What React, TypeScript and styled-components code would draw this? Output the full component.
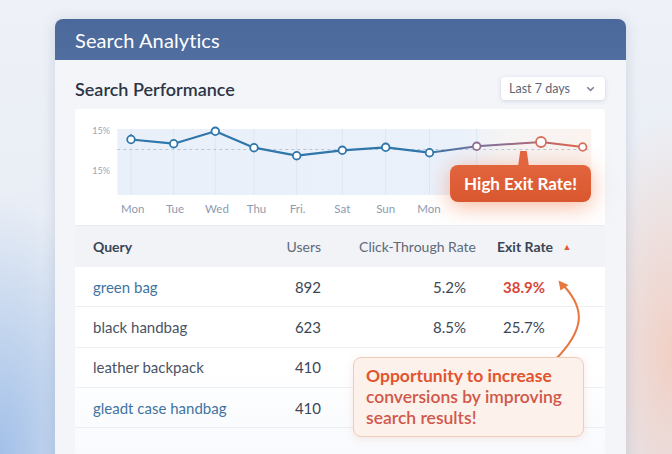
import React, { FC } from 'react';
import styled, { createGlobalStyle } from 'styled-components';

const GlobalStyle = createGlobalStyle`
  html, body {
    margin: 0;
    padding: 0;
  }
  body {
    font-family: Lato, "Noto Sans", "Liberation Sans", sans-serif;
  }
`;

interface Point {
  x: number;
  y: number;
  big?: boolean;
}

const points: Point[] = [
  { x: 56, y: 30.5 },
  { x: 98.7, y: 34.7 },
  { x: 140.3, y: 22.3 },
  { x: 179, y: 38.7 },
  { x: 221.7, y: 46.7 },
  { x: 267.3, y: 41.3 },
  { x: 310.7, y: 38.3 },
  { x: 354.5, y: 43.7 },
  { x: 401.7, y: 37.3 },
  { x: 466, y: 33, big: true },
  { x: 507.7, y: 38 },
];

const days = [
  { label: 'Mon', x: 57.8 },
  { label: 'Tue', x: 100 },
  { label: 'Wed', x: 142 },
  { label: 'Thu', x: 181.5 },
  { label: 'Fri.', x: 222.7 },
  { label: 'Sat', x: 267.3 },
  { label: 'Sun', x: 310.7 },
  { label: 'Mon', x: 354 },
];

interface Row {
  query: string;
  users: number;
  ctr?: string;
  exit?: string;
  link?: boolean;
  hot?: boolean;
}

const rows: Row[] = [
  { query: 'green bag', users: 892, ctr: '5.2%', exit: '38.9%', link: true, hot: true },
  { query: 'black handbag', users: 623, ctr: '8.5%', exit: '25.7%' },
  { query: 'leather backpack', users: 410 },
  { query: 'gleadt case handbag', users: 410, link: true },
];

const Chart: FC = () => {
  const blue = points.slice(0, 8);
  const warm = points.slice(7);
  const toPath = (list: Point[]) =>
    list.map((p, i) => `${i === 0 ? 'M' : 'L'} ${p.x} ${p.y}`).join(' ');

  return (
    <ChartSvg width={529} height={116} viewBox="0 0 529 116">
      <defs>
        <linearGradient id="warmLine" x1="354" y1="0" x2="508" y2="0" gradientUnits="userSpaceOnUse">
          <stop offset="0" stopColor="#3a78aa" />
          <stop offset="0.45" stopColor="#8a6f96" />
          <stop offset="1" stopColor="#e0654a" />
        </linearGradient>
        <linearGradient id="plotFill" x1="0" y1="0" x2="1" y2="0">
          <stop offset="0" stopColor="#e9f0fa" />
          <stop offset="0.72" stopColor="#eaf1fb" />
          <stop offset="0.82" stopColor="#f6f4f4" />
          <stop offset="1" stopColor="#fbf3ef" />
        </linearGradient>
      </defs>
      <rect x={42.3} y={20} width={474} height={66} fill="url(#plotFill)" />
      {points.slice(0, 9).map((p, i) => (
        <line key={i} x1={p.x} y1={20} x2={p.x} y2={86} stroke="#dde6f2" strokeWidth={1} />
      ))}
      <line x1={42.3} y1={40.5} x2={516} y2={40.5} stroke="#b9c5d6" strokeWidth={1} strokeDasharray="3 3" />
      <GridLabel x={35} y={24.5} textAnchor="end">15%</GridLabel>
      <GridLabel x={35} y={64.5} textAnchor="end">15%</GridLabel>
      <path d="M 56 30 L 56 25" stroke="#3a78aa" strokeWidth={1.4} />
      <path d={toPath(blue)} fill="none" stroke="#2f76ab" strokeWidth={2.2} strokeLinejoin="round" />
      <path d={toPath(warm)} fill="none" stroke="url(#warmLine)" strokeWidth={2} strokeLinejoin="round" />
      {points.map((p, i) => (
        <circle
          key={i}
          cx={p.x}
          cy={p.y}
          r={p.big ? 5 : 3.8}
          fill="#ffffff"
          stroke={i < 8 ? '#2f76ab' : i === 8 ? '#8d7091' : '#d8705e'}
          strokeWidth={1.8}
        />
      ))}
      {days.map((d, i) => (
        <DayLabel key={i} x={d.x} y={103.5} textAnchor="middle">
          {d.label}
        </DayLabel>
      ))}
    </ChartSvg>
  );
};

const App: FC = () => {
  return (
    <Page>
      <GlobalStyle />
      <Card>
        <CardHeader>Search Analytics</CardHeader>
        <CardBody>
          <TitleRow>
            <Title>Search Performance</Title>
            <RangeSelect>
              Last 7 days
              <svg width="9" height="6" viewBox="0 0 9 6">
                <path d="M1.2 1.2 L4.5 4.4 L7.8 1.2" fill="none" stroke="#7b8594" strokeWidth="1.5" />
              </svg>
            </RangeSelect>
          </TitleRow>
          <ChartPanel>
            <Chart />
            <ExitBadge>High Exit Rate!</ExitBadge>
          </ChartPanel>
          <TablePanel>
            <HeadRow>
              <Cell $strong>Query</Cell>
              <Cell $align="right">Users</Cell>
              <Cell $align="right">Click-Through Rate</Cell>
              <Cell $strong>
                Exit Rate <SortMark>▲</SortMark>
              </Cell>
            </HeadRow>
            {rows.map((r, i) => (
              <BodyRow key={i}>
                <QueryCell $link={r.link}>{r.query}</QueryCell>
                <Cell $align="right" $dark>
                  {r.users}
                </Cell>
                <Cell $align="right" $dark $pad="0 10px 0 0">
                  {r.ctr}
                </Cell>
                <ExitCell $hot={r.hot}>{r.exit}</ExitCell>
              </BodyRow>
            ))}
            <ArrowSvg width={60} height={90} viewBox="0 0 60 90">
              <path d="M 11 80 C 40 50, 40 30, 19 7" fill="none" stroke="#e8763f" strokeWidth={2} strokeLinecap="round" />
              <path d="M 13.5 1.5 L 23.5 6 L 15.5 11.5 Z" fill="#e8763f" />
            </ArrowSvg>
            <Opportunity>
              <strong>Opportunity to increase</strong>
              <span>conversions by improving</span>
              <span>search results!</span>
            </Opportunity>
          </TablePanel>
        </CardBody>
      </Card>
    </Page>
  );
};

const Page = styled.div`
  width: 672px;
  height: 454px;
  overflow: hidden;
  box-sizing: border-box;
  padding: 19px 46px 0 55px;
  background:
    radial-gradient(ellipse 120px 260px at 0% 100%, rgba(140, 178, 228, 0.75), transparent),
    radial-gradient(ellipse 90px 240px at 100% 78%, rgba(246, 196, 176, 0.7), transparent),
    linear-gradient(180deg, #eef1f7 0%, #e8edf5 60%, #e4eaf4 100%);
`;

const Card = styled.div`
  height: 470px;
  border-radius: 8px 8px 0 0;
  background: #f3f5f9;
  box-shadow: 0 2px 14px rgba(60, 80, 120, 0.18);
  overflow: hidden;
`;

const CardHeader = styled.div`
  height: 41px;
  display: flex;
  align-items: center;
  padding: 1px 0 0 20px;
  box-sizing: border-box;
  background: linear-gradient(180deg, #4a6899 0%, #506e9f 100%);
  color: #ffffff;
  font-size: 20px;
  letter-spacing: 0.1px;
`;

const CardBody = styled.div`
  padding: 0 21px 0 20px;
`;

const TitleRow = styled.div`
  display: flex;
  justify-content: space-between;
  align-items: center;
  height: 23px;
  margin: 17px 0 9px;
`;

const Title = styled.div`
  font-size: 18px;
  font-weight: 600;
  color: #2c3646;
`;

const RangeSelect = styled.div`
  display: flex;
  align-items: center;
  justify-content: space-between;
  box-sizing: border-box;
  width: 104px;
  height: 23px;
  padding: 0 10px 0 8px;
  background: #ffffff;
  border-radius: 4px;
  box-shadow: 0 1px 4px rgba(70, 90, 120, 0.2);
  font-size: 12.5px;
  color: #5d6776;
`;

const ChartPanel = styled.div`
  position: relative;
  height: 116px;
  background: #ffffff;
  border-radius: 3px 3px 0 0;
`;

const ChartSvg = styled.svg`
  display: block;
`;

const GridLabel = styled.text`
  font-size: 9px;
  fill: #9aa6b6;
  font-family: Lato, "Noto Sans", sans-serif;
`;

const DayLabel = styled.text`
  font-size: 11.5px;
  fill: #8d9bb0;
  font-family: Lato, "Noto Sans", sans-serif;
`;

const ExitBadge = styled.div`
  position: absolute;
  left: 375px;
  top: 56px;
  width: 141px;
  height: 37px;
  display: flex;
  align-items: center;
  justify-content: center;
  border-radius: 8px;
  background: linear-gradient(180deg, #e2653d 0%, #d9572f 100%);
  box-shadow: 0 4px 22px rgba(240, 110, 60, 0.5);
  color: #ffffff;
  font-size: 17px;
  font-weight: 700;
  &::before {
    content: '';
    position: absolute;
    left: 68px;
    top: -14px;
    width: 11px;
    height: 16px;
    background: #e2653d;
    border-radius: 3px 3px 0 0;
    clip-path: polygon(20% 0, 80% 0, 100% 100%, 0 100%);
  }
`;

const TablePanel = styled.div`
  position: relative;
  background: linear-gradient(180deg, #ffffff 60%, #f7f9fd 100%);
  height: 240px;
`;

const HeadRow = styled.div`
  display: grid;
  grid-template-columns: 160px 68px 155px 1fr;
  align-items: center;
  height: 42px;
  padding-left: 18px;
  background: #f1f3f7;
  border-top: 1px solid #e8ecf2;
  box-sizing: border-box;
  font-size: 14px;
  color: #5f6978;
  & > div:last-child {
    padding-left: 21px;
  }
`;

const BodyRow = styled.div`
  display: grid;
  grid-template-columns: 160px 68px 155px 1fr;
  align-items: center;
  height: 40.3px;
  padding-left: 18px;
  border-bottom: 1px solid #eceff4;
  box-sizing: border-box;
  font-size: 15px;
`;

const Cell = styled.div<{ $align?: 'left' | 'right'; $strong?: boolean; $dark?: boolean; $pad?: string }>`
  text-align: ${({ $align }) => $align || 'left'};
  font-weight: ${({ $strong }) => ($strong ? 700 : 400)};
  color: ${({ $strong, $dark }) => ($strong ? '#3a4555' : $dark ? '#3c4656' : 'inherit')};
  padding: ${({ $pad }) => $pad || '0'};
  white-space: nowrap;
`;

const QueryCell = styled.div<{ $link?: boolean }>`
  color: ${({ $link }) => ($link ? '#3f74a1' : '#4a5464')};
  white-space: nowrap;
`;

const ExitCell = styled.div<{ $hot?: boolean }>`
  padding-left: 27px;
  font-weight: ${({ $hot }) => ($hot ? 700 : 400)};
  color: ${({ $hot }) => ($hot ? '#d8463a' : '#3c4656')};
`;

const SortMark = styled.span`
  margin-left: 6px;
  font-size: 9px;
  color: #e0583c;
  vertical-align: 2px;
`;

const ArrowSvg = styled.svg`
  position: absolute;
  left: 470px;
  top: 54px;
  overflow: visible;
`;

const Opportunity = styled.div`
  position: absolute;
  left: 278px;
  top: 132px;
  width: 231px;
  height: 80px;
  box-sizing: border-box;
  padding: 7px 8px 0 12px;
  display: flex;
  flex-direction: column;
  background: #fcf1eb;
  border: 1px solid #f0cdb9;
  border-radius: 8px;
  box-shadow: 0 2px 8px rgba(220, 140, 110, 0.18);
  font-size: 17.5px;
  line-height: 21px;
  color: #d0584a;
  font-weight: 600;
  white-space: nowrap;
  strong {
    color: #e0552f;
    font-weight: 700;
  }
`;

export default App;
